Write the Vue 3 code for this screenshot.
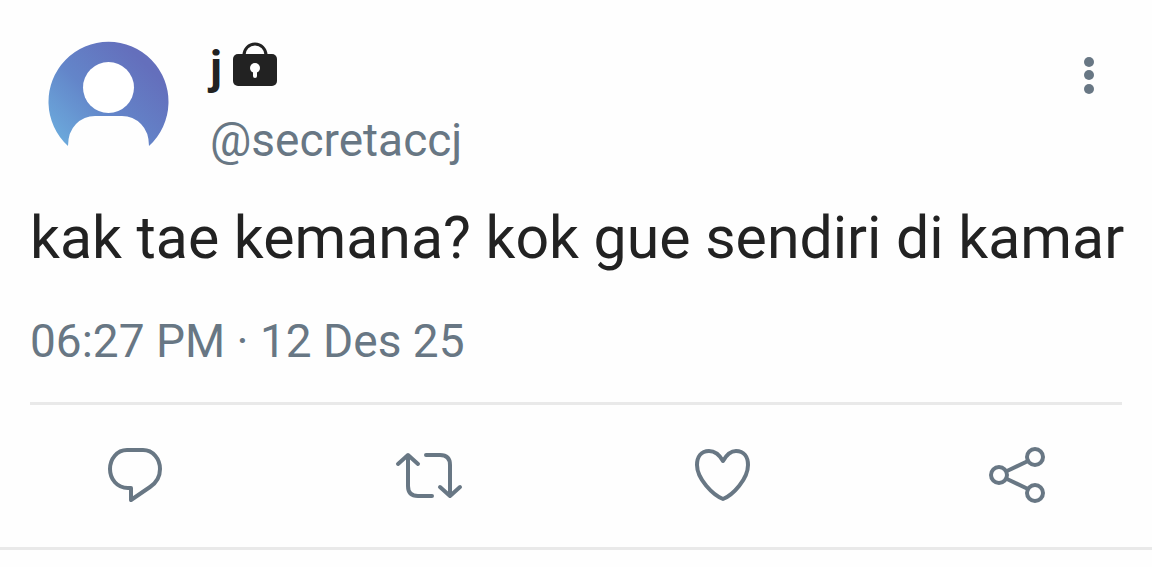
<script setup>
const tweet = {
  name: 'j',
  handle: '@secretaccj',
  text: 'kak tae kemana? kok gue sendiri di kamar',
  time: '06:27 PM · 12 Des 25',
}

const actions = [
  {
    label: 'Reply',
    paths: ['M37 20H53C63 20 70 29 70 39C70 47 66 53 60 57L41 70V58H38C27 58 20 49 20 39C20 29 27 20 37 20Z'],
  },
  {
    label: 'Repost',
    paths: ['M13 34L23 25L33 34', 'M23 26V56Q23 66 33 66H47', 'M41 25H55Q65 25 65 35V65', 'M55 57L65 66L75 57'],
  },
  {
    label: 'Like',
    paths: ['M43 31C39 24 34 21 29 21C21 21 17 27 17 35C17 49 33 65 43 69C53 65 68 49 68 35C68 27 64 21 56 21C51 21 47 24 43 31Z'],
  },
  {
    label: 'Share',
    paths: ['M32 41L53 31', 'M32 49L53 59'],
    circles: [[24, 45], [60, 27], [60, 63]],
  },
]
</script>

<template>
  <article class="tweet">
    <header class="header">
      <svg class="avatar" viewBox="0 0 121 121" aria-hidden="true">
        <defs>
          <linearGradient id="avatar-fill" x1="0" y1="0.9" x2="0.8" y2="0.2">
            <stop offset="0" stop-color="#6cacdd" />
            <stop offset="0.5" stop-color="#6385c9" />
            <stop offset="1" stop-color="#646fbc" />
          </linearGradient>
        </defs>
        <path d="M20 105A60 60 0 1 1 101 105Q101 91 93 83T74 75H47Q36 75 28 83T20 105Z" fill="url(#avatar-fill)" />
        <circle cx="60.5" cy="46.5" r="25.5" fill="#fff" />
      </svg>
      <div class="author">
        <div class="name">
          <span>{{ tweet.name }}</span>
          <svg class="lock" viewBox="0 0 46 46" role="img" aria-label="Protected account">
            <path d="M12 16V14A11 11 0 0 1 34 14V16" fill="none" stroke="#222" stroke-width="3" />
            <rect x="1" y="13" width="44" height="32" rx="5" fill="#222" />
            <circle cx="23" cy="27" r="5" fill="#fff" />
            <path d="M21 29H25V35A2 2 0 0 1 21 35Z" fill="#fff" />
          </svg>
        </div>
        <a class="handle" href="#">{{ tweet.handle }}</a>
      </div>
      <button class="more" type="button" aria-label="More options">
        <svg viewBox="0 0 30 60" aria-hidden="true">
          <circle cx="15" cy="17" r="5" />
          <circle cx="15" cy="30" r="5" />
          <circle cx="15" cy="44" r="5" />
        </svg>
      </button>
    </header>
    <p class="text">{{ tweet.text }}</p>
    <time class="time">{{ tweet.time }}</time>
    <div class="actions">
      <button v-for="a in actions" :key="a.label" class="action" type="button" :aria-label="a.label">
        <svg viewBox="0 0 90 90" aria-hidden="true">
          <path v-for="d in a.paths" :key="d" :d="d" />
          <circle v-for="c in a.circles" :key="c.join()" :cx="c[0]" :cy="c[1]" r="8" />
        </svg>
      </button>
    </div>
  </article>
</template>

<style>
body {
  margin: 0;
  background: #fefefe;
}
</style>

<style scoped>
.tweet {
  padding-top: 32px;
  border-bottom: 3px solid #e9e9e9;
  font-family: Roboto, sans-serif;
  color: #222;
}
.header {
  display: flex;
  align-items: flex-start;
  padding: 0 48px;
}
.avatar {
  width: 121px;
  height: 121px;
  margin-top: 9px;
  flex: none;
}
.author {
  flex: 1;
  margin-left: 41px;
  font-size: 46px;
  line-height: 72px;
}
.name {
  display: flex;
  gap: 10px;
  font-weight: 700;
}
.lock {
  width: 46px;
  height: 46px;
  margin-top: 9px;
}
.handle {
  display: block;
  color: #687784;
  text-decoration: none;
}
button {
  padding: 0;
  border: 0;
  background: none;
  cursor: pointer;
}
button svg {
  display: block;
}
.more {
  width: 30px;
  height: 60px;
  margin-top: 13px;
}
.more svg {
  fill: #687784;
}
.text {
  margin: 26px 0 0;
  padding: 0 20px 0 30px;
  font-size: 59px;
  line-height: 72px;
}
.time {
  display: block;
  margin: 40px 30px 0;
  padding-bottom: 34px;
  border-bottom: 3px solid #e9e9e9;
  font-size: 46px;
  line-height: 54px;
  color: #687784;
}
.actions {
  display: flex;
  justify-content: space-between;
  padding: 25px 87px 27px 90px;
}
.action {
  width: 90px;
  height: 90px;
}
.action svg {
  fill: none;
  stroke: #687784;
  stroke-width: 4;
  stroke-linecap: round;
  stroke-linejoin: round;
}
</style>
